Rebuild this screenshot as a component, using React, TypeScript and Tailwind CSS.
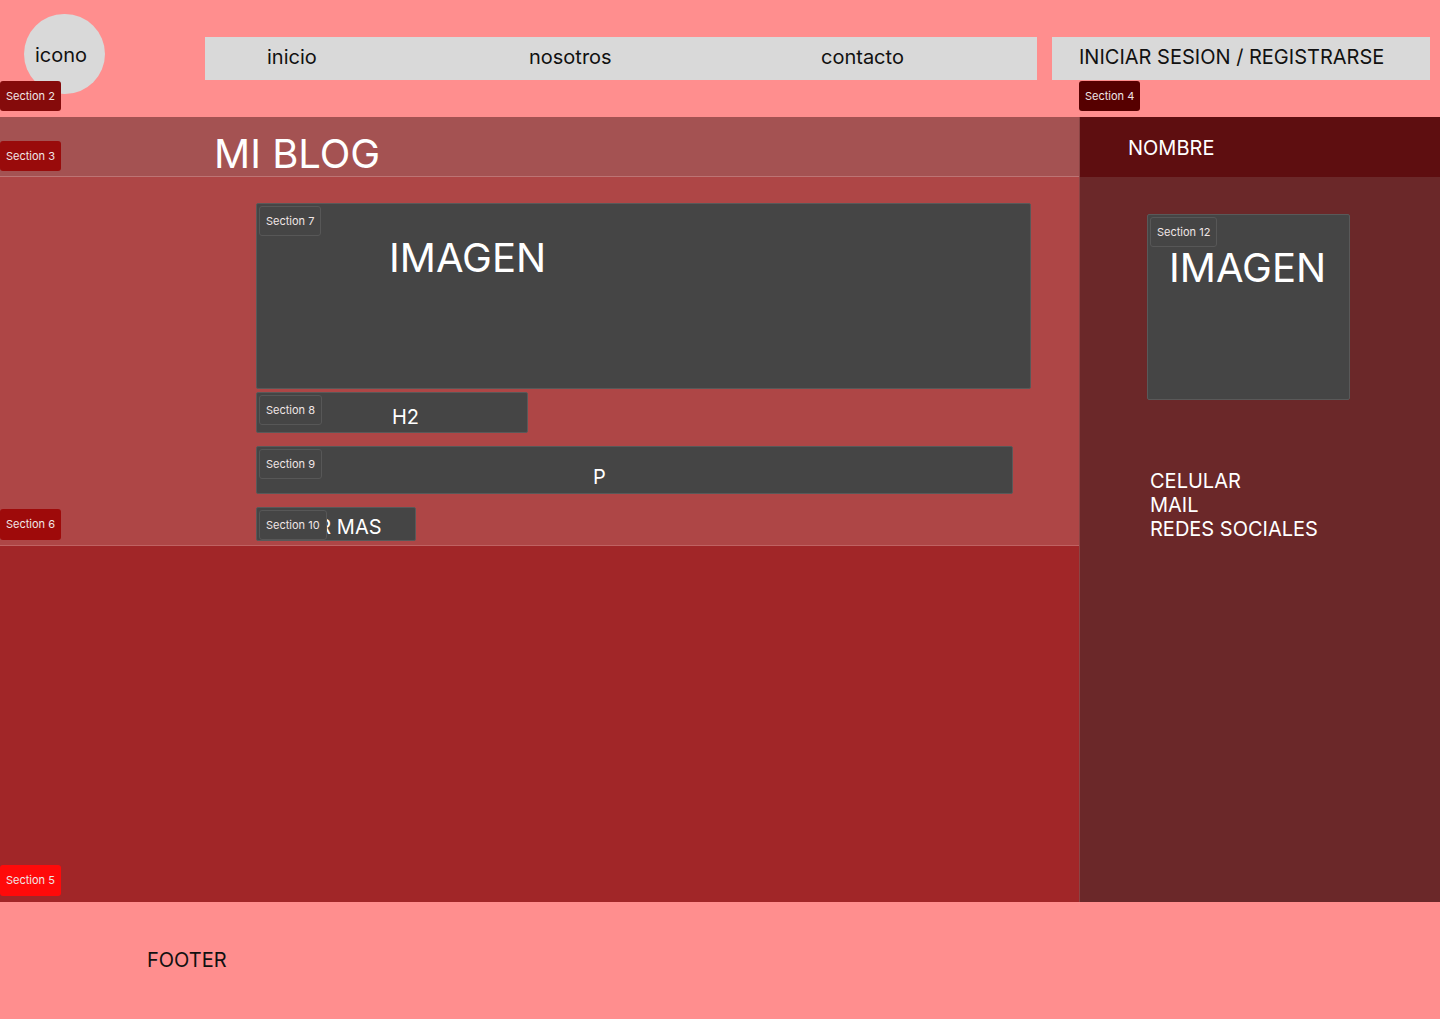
import React from "react";

const font = { fontFamily: "Inter, 'Noto Sans', sans-serif" };

// little Figma-like frame tag (overlays its frame)
const Tag: React.FC<{ label: string; className?: string }> = ({ label, className = "" }) => (
  <div
    className={`absolute h-[30px] px-[6px] flex items-center rounded-[3px] text-[11px] text-[#f0e6e6] ${className}`}
  >
    {label}
  </div>
);

const DarkBox: React.FC<{ label: string; className?: string; children?: React.ReactNode }> = ({
  label,
  className = "",
  children,
}) => (
  <div className={`relative flex bg-[#454545] border border-[#595959] rounded-[2px] text-white ${className}`}>
    <Tag label={label} className="left-[2px] top-[2px] h-[29px] border border-[#575757] text-[#e6e6e6]" />
    {children}
  </div>
);

export default function App() {
  return (
    <div className="w-[1440px] h-[1019px] bg-[#ff8e8e] flex flex-col overflow-hidden" style={font}>
      {/* Header */}
      <div className="relative h-[117px] flex items-start">
        <div className="ml-[24px] mt-[14px] w-[81px] h-[80px] rounded-full bg-[#d9d9d9] flex items-center justify-center pr-[7px] pt-[1px] text-[20px] text-[#111]">
          icono
        </div>
        <nav className="ml-[100px] mt-[37px] w-[832px] h-[43px] bg-[#d9d9d9] text-[20px] text-[#111] flex items-center pb-[3px] pl-[62px]">
          <span className="w-[262px]">inicio</span>
          <span className="w-[292px]">nosotros</span>
          <span>contacto</span>
        </nav>
        <div className="ml-[15px] mt-[37px] w-[378px] h-[43px] bg-[#d9d9d9] text-[20px] text-[#111] pl-[27px] pb-[4px] flex items-center">
          INICIAR SESION / REGISTRARSE
        </div>
        <Tag label="Section 2" className="left-0 top-[81px] bg-[#850b0b]" />
        <Tag label="Section 4" className="left-[1079px] top-[81px] bg-[#560000]" />
      </div>

      {/* Body */}
      <div className="flex h-[785px]">
        <div className="w-[1079px] flex flex-col">
          <div className="relative h-[60px] bg-[#a45252] border-b border-[#bd7474] flex items-center pl-[214px] pt-[15px]">
            <Tag label="Section 3" className="left-0 top-[24px] bg-[#990b0b]" />
            <h1 className="text-[40px] leading-[48px] text-white">MI BLOG</h1>
          </div>
          <div className="relative h-[369px] bg-[#ae4646] border-b border-[#c06262] pl-[256px] pt-[26px] flex flex-col items-start">
            <DarkBox label="Section 7" className="w-[775px] h-[186px] pl-[132px] pt-[30px]">
              <span className="text-[40px] leading-[48px]">IMAGEN</span>
            </DarkBox>
            <DarkBox label="Section 8" className="mt-[3px] w-[272px] h-[41px] pl-[135px] pt-[12px]">
              <span className="text-[20px] leading-[24px]">H2</span>
            </DarkBox>
            <DarkBox label="Section 9" className="mt-[13px] w-[757px] h-[48px] pl-[336px] pt-[18px]">
              <span className="text-[20px] leading-[24px]">P</span>
            </DarkBox>
            <div className="relative flex mt-[13px] w-[160px] h-[34px] bg-[#454545] border border-[#595959] rounded-[2px] text-white overflow-hidden pl-[26px] pt-[7px]">
              <span className="text-[20px] leading-[24px] whitespace-nowrap">LEER MAS</span>
              <Tag
                label="Section 10"
                className="left-[2px] top-[2px] h-[29px] bg-[#454545] border border-[#575757] text-[#e6e6e6]"
              />
            </div>
            <Tag label="Section 6" className="left-0 top-[332px] h-[31px] bg-[#9e0a0a]" />
          </div>
          <div className="relative flex-1 bg-[#a12628]">
            <Tag label="Section 5" className="left-0 top-[319px] h-[31px] bg-[#ff0a0a]" />
          </div>
        </div>

        <aside className="flex-1 flex flex-col border-l border-[#8a4444]">
          <div className="h-[60px] bg-[#5e0e10] flex items-center pl-[48px] pt-[2px] text-[20px] text-white">NOMBRE</div>
          <div className="flex-1 bg-[#6b2829] pl-[67px] pt-[37px] flex flex-col items-start">
            <DarkBox label="Section 12" className="w-[203px] h-[186px] pl-[21px] pt-[29px]">
              <span className="text-[40px] leading-[48px]">IMAGEN</span>
            </DarkBox>
            <div className="mt-[69px] ml-[3px] flex flex-col text-[20px] leading-[24px] text-white">
              <p>CELULAR</p>
              <p>MAIL</p>
              <p>REDES SOCIALES</p>
            </div>
          </div>
        </aside>
      </div>

      {/* Footer */}
      <footer className="flex-1 pl-[147px] pt-[43px] text-[20px] text-[#111]">FOOTER</footer>
    </div>
  );
}
